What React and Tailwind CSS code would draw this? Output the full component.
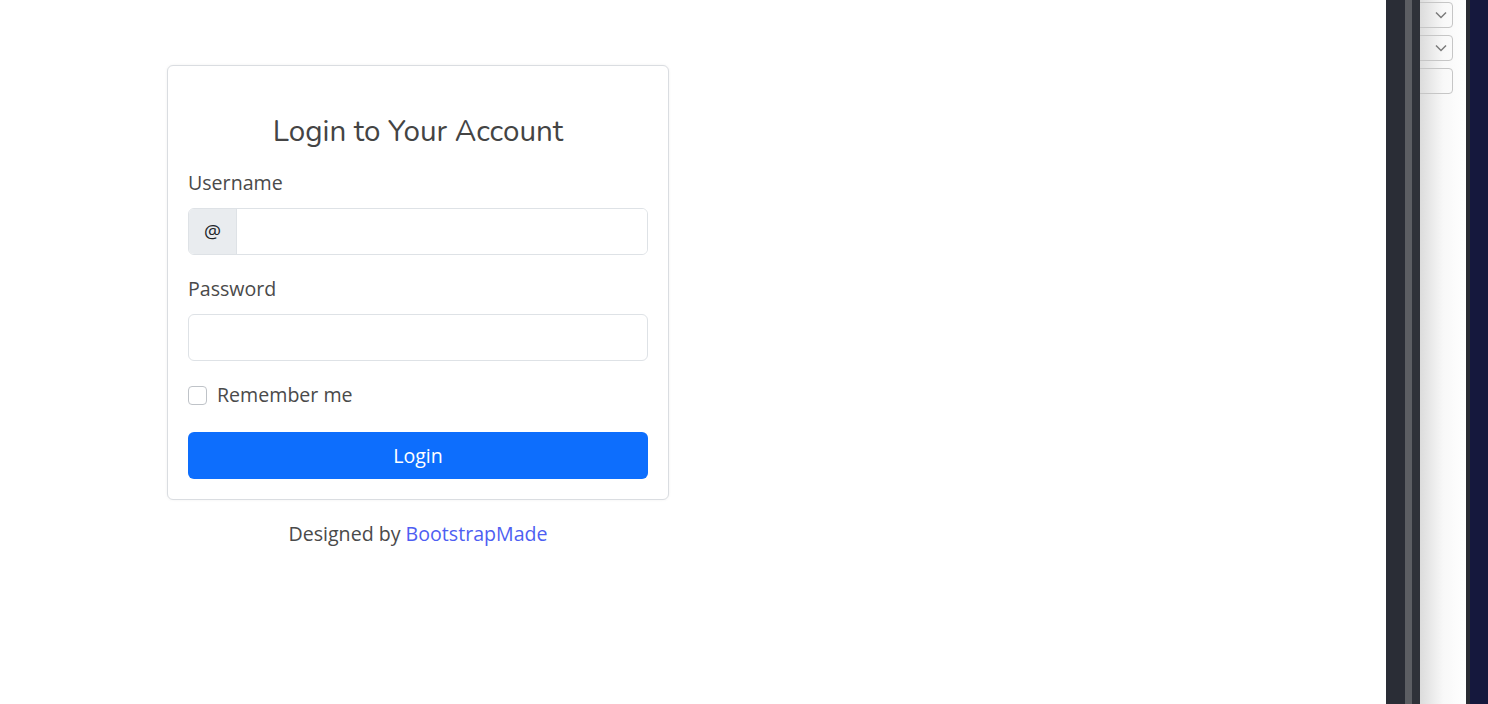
import React from "react";

export default function App() {
  return (
    <div className="w-[1488px] h-[704px] bg-white flex overflow-hidden">
      <div className="w-[1386px] h-full relative font-['Open_Sans',sans-serif]">
        <div className="ml-[167px] mt-[65px] w-[502px] flex flex-col">
          <div className="border border-[#dadde1] rounded-[6px] bg-white px-5 pt-[47px] pb-5 shadow-[0_0_3px_rgba(0,0,0,0.06)]">
            <h1 className="text-center text-[29.6px] leading-[36px] text-[#444444] font-['Nunito','Lato',sans-serif] mb-[20px]">Login to Your Account</h1>
            <div className="text-[19.6px] leading-[28px] text-[#4a4a4a] mb-[11px]">Username</div>
            <div className="flex h-[47px] border border-[#dee2e6] rounded-[6px] overflow-hidden">
              <div className="w-[48px] bg-[#e9ecef] border-r border-[#dee2e6] flex items-center justify-center text-[19px] text-[#212529]">@</div>
              <div className="flex-1 bg-white"></div>
            </div>
            <div className="text-[19.6px] leading-[28px] text-[#4a4a4a] mt-[20px] mb-[11px]">Password</div>
            <div className="h-[47px] border border-[#dee2e6] rounded-[6px] bg-white"></div>
            <div className="flex items-center mt-[24px] h-[20px]">
              <div className="w-[19px] h-[19px] border border-[#bfc3c8] rounded-[4px] bg-white"></div>
              <span className="ml-[10px] text-[19.6px] text-[#4a4a4a] leading-[28px]">Remember me</span>
            </div>
            <div className="mt-[27px] h-[47px] rounded-[6px] bg-[#0d6efd] flex items-center justify-center text-white text-[19.6px]">Login</div>
          </div>
          <div className="text-center mt-[19px] text-[19.6px] leading-[30px] text-[#4a4a4a]">
            Designed by <span className="text-[#4e5ef2]">BootstrapMade</span>
          </div>
        </div>
      </div>
      <div className="w-[19px] h-full bg-[#2a2d36]"></div>
      <div className="w-[7px] h-full bg-[#5c5e63]"></div>
      <div className="w-[8px] h-full bg-[#2f3239]"></div>
      <div className="w-[46px] h-full bg-gradient-to-r from-[#dcdcdc] via-[#f8f8f8] to-white relative overflow-hidden">
        <div className="flex flex-col gap-[7px] pt-[2px] -ml-[20px] w-[53px]">
          <div className="h-[26px] border border-[#c6c6c6] rounded-[4px] flex items-center justify-end pr-[5px]">
            <svg width="12" height="8" viewBox="0 0 12 8" fill="none"><path d="M1 1.5l5 5 5-5" stroke="#7a7a7a" strokeWidth="1.5"/></svg>
          </div>
          <div className="h-[26px] border border-[#c6c6c6] rounded-[4px] flex items-center justify-end pr-[5px]">
            <svg width="12" height="8" viewBox="0 0 12 8" fill="none"><path d="M1 1.5l5 5 5-5" stroke="#7a7a7a" strokeWidth="1.5"/></svg>
          </div>
          <div className="h-[26px] border border-[#c6c6c6] rounded-[4px]"></div>
        </div>
      </div>
      <div className="w-[4px] h-full bg-[#2a2c33]"></div>
      <div className="flex-1 h-full bg-[#15183d]"></div>
    </div>
  );
}
